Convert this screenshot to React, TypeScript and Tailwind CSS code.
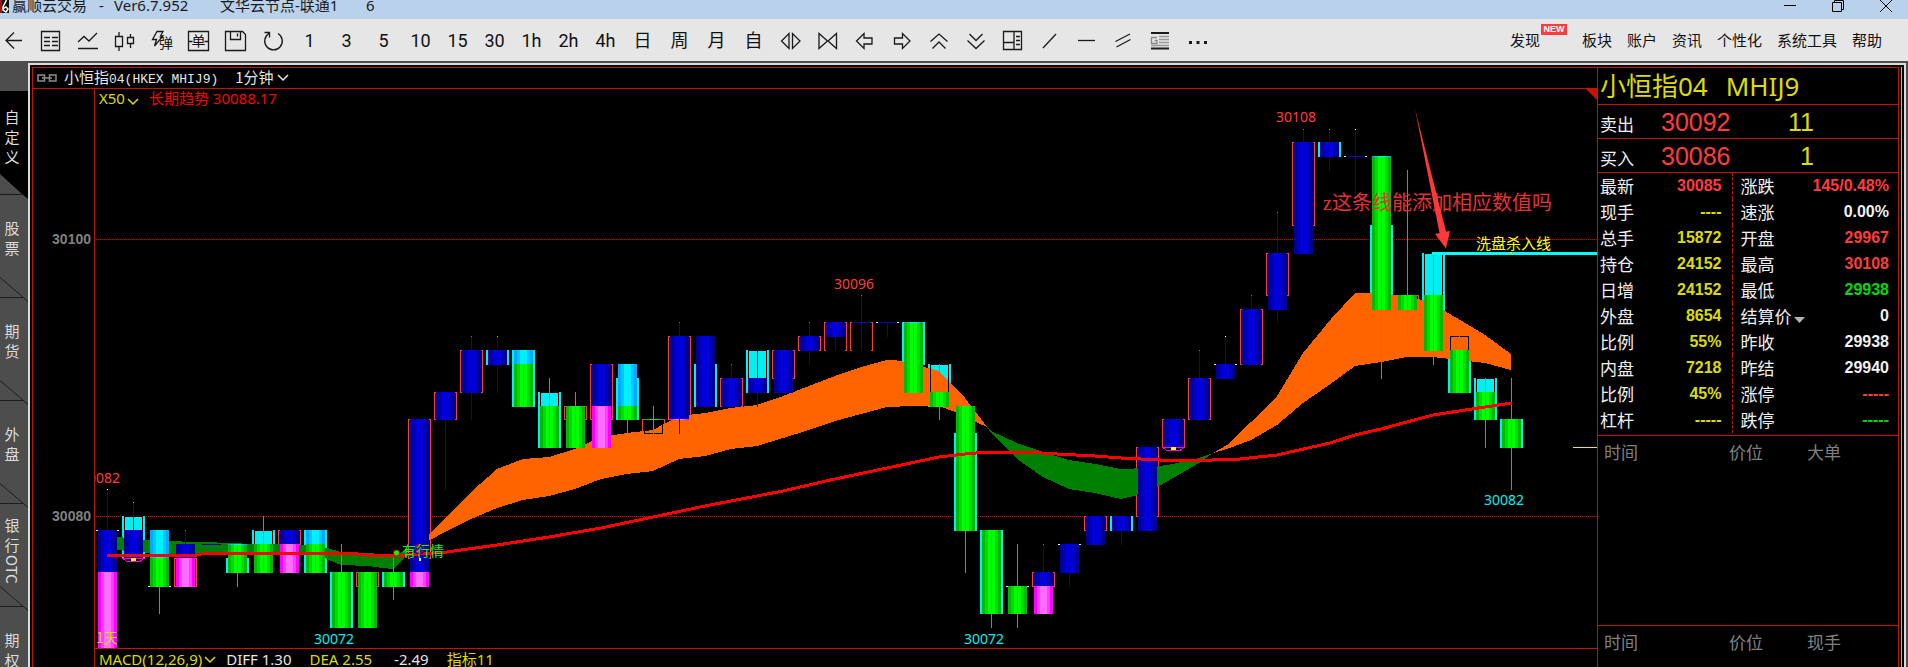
import type { ReactNode } from "react";

const SANS = "font-['Noto_Sans','Noto_Sans_CJK_SC',sans-serif]";
const CJK = "font-['Noto_Sans_CJK_SC',sans-serif]";

/* ---------- chart model ---------- */

type Fill = "B" | "G" | "P" | "L" | "C" | "K";
type Frame = "r" | "c" | "w";

interface Candle {
  i: number;
  frame?: [Frame, number, number];
  body: [Fill, number, number][];
  wick?: [number, number, "b" | "g"];
  dot?: string;
}

const px = (i: number) => 107 + 26 * i;
const py = (p: number) => Math.round(239.3 + (100 - p) * 13.85);

const RED = "#ff3c3c";
const CYAN = "#00f0f0";

const candles: Candle[] = [
  { i: 0, frame: ["w", 79, 79], body: [["B", 79, 76], ["P", 76, 70]], wick: [82, 79, "b"], dot: "#fff" },
  { i: 1, frame: ["c", 80, 77], body: [["C", 80, 79], ["B", 79, 77]], wick: [81, 79, "b"], dot: CYAN },
  { i: 2, frame: ["w", 75, 75], body: [["L", 79, 77], ["G", 77, 75]], wick: [75, 73, "g"] },
  { i: 3, frame: ["r", 77, 75], body: [["B", 78, 77], ["P", 77, 75]], wick: [79, 78, "b"], dot: RED },
  { i: 4, body: [["B", 78, 78]] },
  { i: 5, frame: ["c", 77, 76], body: [["G", 78, 76], ["L", 78, 78]], wick: [76, 75, "g"] },
  { i: 6, frame: ["c", 79, 78], body: [["C", 79, 78], ["G", 78, 76]], wick: [80, 77, "g"] },
  { i: 7, frame: ["r", 79, 78], body: [["B", 79, 78], ["P", 78, 76]] },
  { i: 8, frame: ["c", 79, 76], body: [["L", 79, 78], ["G", 78, 76]] },
  { i: 9, frame: ["c", 76, 72], body: [["G", 76, 72]], wick: [78, 76, "g"] },
  { i: 10, frame: ["r", 76, 75], body: [["G", 76, 72]] },
  { i: 11, frame: ["c", 76, 75], body: [["G", 76, 75]], wick: [77, 74, "g"] },
  { i: 12, frame: ["r", 87, 77], body: [["B", 87, 76], ["P", 76, 75]] },
  { i: 13, frame: ["r", 89, 87], body: [["B", 89, 87]], wick: [87, 82, "b"] },
  { i: 14, frame: ["r", 92, 89], body: [["B", 92, 89]], wick: [93, 87, "b"], dot: RED },
  { i: 15, frame: ["c", 92, 91], body: [["B", 92, 91]], wick: [93, 89, "b"], dot: CYAN },
  { i: 16, frame: ["c", 92, 88], body: [["L", 92, 91], ["G", 91, 88]] },
  { i: 17, frame: ["c", 89, 85], body: [["C", 89, 88], ["G", 88, 85]], wick: [90, 86, "g"] },
  { i: 18, frame: ["r", 88, 87], body: [["G", 88, 85]], wick: [89, 86, "g"] },
  { i: 19, frame: ["r", 91, 87], body: [["B", 91, 88], ["P", 88, 85]] },
  { i: 20, frame: ["c", 90, 87], body: [["L", 91, 88], ["G", 88, 87]], wick: [87, 86, "g"] },
  { i: 21, frame: ["r", 87, 86], body: [["K", 87, 86], ["G", 87, 87]], wick: [88, 86, "g"] },
  { i: 22, frame: ["r", 93, 87], body: [["B", 93, 87], ["P", 87, 87]], wick: [94, 86, "b"], dot: RED },
  { i: 23, frame: ["c", 91, 88], body: [["B", 93, 88]] },
  { i: 24, frame: ["r", 90, 88], body: [["B", 90, 88]], wick: [91, 90, "b"], dot: RED },
  { i: 25, frame: ["c", 92, 89], body: [["C", 92, 90], ["B", 90, 89]], wick: [92, 88, "b"] },
  { i: 26, frame: ["r", 92, 90], body: [["B", 92, 89]] },
  { i: 27, frame: ["r", 93, 92], body: [["B", 93, 92]], wick: [94, 91, "b"], dot: RED },
  { i: 28, frame: ["r", 94, 92], body: [["B", 94, 93]], wick: [93, 92, "b"] },
  { i: 29, frame: ["r", 94, 92], body: [["B", 94, 94]], wick: [96, 92, "b"], dot: RED },
  { i: 30, frame: ["w", 94, 94], body: [["B", 94, 94]], wick: [94, 93, "b"] },
  { i: 31, frame: ["c", 94, 91], body: [["G", 94, 89], ["L", 94, 94]] },
  { i: 32, frame: ["c", 91, 88], body: [["C", 91, 89], ["G", 89, 88]], wick: [91, 87, "g"] },
  { i: 33, frame: ["c", 86, 79], body: [["G", 88, 79]], wick: [79, 76, "g"] },
  { i: 34, frame: ["c", 79, 73], body: [["G", 79, 73]], wick: [73, 72, "g"] },
  { i: 35, frame: ["w", 75, 75], body: [["G", 75, 73]], wick: [78, 72, "g"] },
  { i: 36, frame: ["r", 76, 75], body: [["B", 76, 75], ["P", 75, 73]], wick: [78, 76, "b"], dot: RED },
  { i: 37, frame: ["w", 78, 78], body: [["B", 78, 76]], wick: [76, 75, "b"] },
  { i: 38, frame: ["r", 80, 79], body: [["B", 80, 78]] },
  { i: 39, frame: ["c", 80, 79], body: [["B", 80, 79]], wick: [79, 78, "b"] },
  { i: 40, frame: ["r", 85, 80], body: [["B", 85, 79]] },
  { i: 41, frame: ["r", 87, 85], body: [["B", 87, 85]] },
  { i: 42, frame: ["r", 90, 87], body: [["B", 90, 87]], wick: [92, 90, "b"], dot: RED },
  { i: 43, frame: ["w", 91, 91], body: [["B", 91, 90]], wick: [93, 91, "b"], dot: "#fff" },
  { i: 44, frame: ["r", 95, 91], body: [["B", 95, 91]], wick: [96, 95, "b"], dot: RED },
  { i: 45, frame: ["r", 99, 96], body: [["B", 99, 95]], wick: [102, 94, "b"], dot: RED },
  { i: 46, frame: ["r", 107, 101], body: [["B", 107, 99]], wick: [108, 107, "b"], dot: RED },
  { i: 47, frame: ["c", 107, 106], body: [["B", 107, 106]], wick: [108, 105, "b"], dot: CYAN },
  { i: 48, frame: ["w", 106, 106], body: [["B", 106, 106]], wick: [108, 103, "b"], dot: "#fff" },
  { i: 49, frame: ["c", 101, 95], body: [["G", 106, 95], ["L", 106, 106]], wick: [101, 90, "g"] },
  { i: 50, frame: ["r", 96, 95], body: [["G", 96, 95]], wick: [105, 93, "g"] },
  { i: 51, frame: ["c", 99, 92], body: [["C", 99, 96], ["G", 96, 92]], wick: [99, 91, "g"] },
  { i: 52, frame: ["c", 93, 89], body: [["K", 93, 92], ["G", 92, 89]], wick: [93, 89, "g"] },
  { i: 53, frame: ["c", 90, 87], body: [["C", 90, 89], ["G", 89, 87]], wick: [90, 85, "g"] },
  { i: 54, frame: ["c", 87, 85], body: [["G", 87, 85]], wick: [90, 82, "g"] },
];

const shades: Record<string, [string, string, string]> = {
  B: ["#000096", "#0000b9", "#0000dc"],
  G: ["#00b900", "#00dc00", "#00ff00"],
  P: ["#ff00ff", "#ff3cff", "#ff6eff"],
  L: ["#00aaff", "#00c8ff", "#00f0ff"],
};

function Bar({ fill, cx, top, bottom }: { fill: Fill; cx: number; top: number; bottom: number }) {
  const h = bottom - top + 1;
  if (fill === "K" || fill === "C")
    return <rect x={cx - 8.5} y={top + 0.5} width={18} height={h - 1} fill="none" stroke="#000" />;
  const [dark, mid, light] = shades[fill];
  return (
    <g>
      <rect x={cx - 9} y={top} width={19} height={h} fill={dark} />
      <rect x={cx - 6} y={top} width={13} height={h} fill={mid} />
      <rect x={cx - 3} y={top} width={7} height={h} fill={light} />
      {h > 4 && fill !== "P" && fill !== "L" && <rect x={cx} y={top + 2} width={1} height={h - 4} fill={mid} />}
    </g>
  );
}

function FrameMarks({ kind, cx, top, bottom }: { kind: Frame; cx: number; top: number; bottom: number }) {
  const h = bottom - top + 1;
  if (kind === "c")
    return (
      <g fill={CYAN}>
        <rect x={cx - 11} y={top} width={2} height={h} />
        <rect x={cx + 10} y={top} width={2} height={h} />
      </g>
    );
  if (kind === "w")
    return (
      <g fill="#f0f0f0">
        <rect x={cx - 11} y={top} width={2} height={1} />
        <rect x={cx + 10} y={top} width={2} height={1} />
      </g>
    );
  return (
    <g fill={RED}>
      <rect x={cx - 11} y={top} width={1} height={h} />
      <rect x={cx + 11} y={top} width={1} height={h} />
      <rect x={cx - 11} y={top} width={2} height={1} />
      <rect x={cx + 10} y={top} width={2} height={1} />
      <rect x={cx - 11} y={bottom} width={2} height={1} />
      <rect x={cx + 10} y={bottom} width={2} height={1} />
    </g>
  );
}

const greenBands = [
  "107,535 133,539 169,541 195,542 210,542 224,543 260,544 303,545 327,548 341,552 367,553 393,555 408,550 404,558 394,569 382,568 368,566 341,565 327,559 315,553 263,552 185,555 150,553 107,549",
  "987,427 991,431 1017,443 1043,452 1069,460 1095,464 1121,469 1147,468 1173,464 1199,458 1213,453 1199,463 1173,478 1147,493 1121,499 1095,493 1069,489 1043,477 1017,459 991,433",
];
const orangeBands = [
  "419,546 429,535 445,518 471,492 497,469 523,459 549,457 575,449 601,437 627,433 653,430 679,416 705,413 731,408 757,405 783,396 809,386 835,376 861,367 887,360 895,360 913,364 939,371 965,398 987,427 965,417 955,412 939,406 913,406 887,407 861,414 835,421 809,430 783,438 757,446 731,449 705,456 679,459 653,471 627,474 601,479 575,489 549,496 523,500 497,508 471,519 445,532",
  "1213,453 1227,445 1251,422 1277,396 1303,353 1331,319 1355,293 1364,293 1381,294 1407,296 1433,303 1443,310 1467,324 1485,335 1511,354 1511,370 1485,363 1459,360 1433,357 1407,357 1381,362 1355,366 1329,385 1303,403 1277,425 1251,440 1227,449",
];
const trend =
  "107,556 150,555 197,555 205,553 350,553 365,555 394,556 420,554 447,552 497,545 549,537 601,528 653,517 705,506 731,501 783,491 835,479 887,468 939,457 965,454 987,452 1027,452 1057,454 1095,456 1121,458 1160,460 1212,460 1240,459 1277,455 1330,443 1355,435 1381,429 1407,422 1433,415 1459,411 1485,407 1512,403";

const priceTags = [
  { x: 1276, y: 122, t: "30108", c: RED },
  { x: 834, y: 289, t: "30096", c: RED },
  { x: 80, y: 483, t: "30082", c: RED },
  { x: 314, y: 644, t: "30072", c: CYAN },
  { x: 964, y: 644, t: "30072", c: CYAN },
  { x: 1484, y: 505, t: "30082", c: CYAN },
];

function Chart() {
  return (
    <svg viewBox="33 89 1564 559" className="block h-auto w-full shrink-0" role="img" aria-label="小恒指04 1分钟 K线图">
      <defs>
        <clipPath id="plot">
          <rect x="95" y="89" width="1502" height="559" />
        </clipPath>
      </defs>
      <g className="font-['Liberation_Sans',sans-serif] text-[14px] font-bold" fill="#808080">
        <text x="91" y="244" textAnchor="end">30100</text>
        <text x="91" y="521" textAnchor="end">30080</text>
      </g>
      <g clipPath="url(#plot)">
        <g shapeRendering="crispEdges">
          <g stroke="#b40000" strokeDasharray="1 1">
            <line x1="96" x2="1597" y1="239.5" y2="239.5" />
            <line x1="96" x2="1597" y1="516.5" y2="516.5" />
          </g>
          {candles.map((c) => (
            <g key={c.i}>
              {c.frame && <FrameMarks kind={c.frame[0]} cx={px(c.i)} top={py(c.frame[1])} bottom={py(c.frame[2])} />}
              {c.body
                .filter((b) => b[0] === "C")
                .map((b) => (
                  <rect key={b[1]} x={px(c.i) - 8} y={py(b[1]) + 1} width={17} height={py(b[2]) - py(b[1])} fill={CYAN} />
                ))}
            </g>
          ))}
          {greenBands.map((p) => (
            <polygon key={p} points={p} fill="#008000" />
          ))}
          {orangeBands.map((p) => (
            <polygon key={p} points={p} fill="#ff6400" />
          ))}
          {candles.map((c) => {
            const x = px(c.i);
            return (
              <g key={c.i}>
                {c.body.map(([f, a, b], n) => (
                  <Bar key={n} fill={f} cx={x} top={py(a)} bottom={py(b)} />
                ))}
                {c.wick && (
                  <rect
                    x={x}
                    y={py(c.wick[0])}
                    width={1}
                    height={py(c.wick[1]) - py(c.wick[0]) + 1}
                    fill={c.wick[2] === "b" ? "#0000c8" : "#00dc00"}
                  />
                )}
                {c.dot && c.wick && <rect x={x} y={py(c.wick[0])} width={1} height={1} fill={c.dot} />}
              </g>
            );
          })}
          <polyline points={trend} fill="none" stroke="#ff0000" strokeWidth="3" />
          {[
            [133, 558],
            [1173, 447],
          ].map(([x, y]) => (
            <g key={x}>
              <path d={`M${x - 10} ${y + 0.5}h21l-4 3h-13z`} fill="#000" stroke="#ff00d2" />
              <rect x={x - 2} y={y} width={5} height={3} fill="#ffff00" />
            </g>
          ))}
          <rect x="1432" y="252" width="165" height="3" fill="#00ffff" />
          <rect x="1510" y="252" width="2" height="2" fill="#ffd200" />
          <rect x="1573" y="447" width="24" height="1" fill="#f0f000" />
        </g>
        <polygon points="1586,89 1597,89 1597,100" fill="#c3140a" />
        <g className={`${SANS} text-[14px]`}>
          {priceTags.map((p) => (
            <text key={`${p.x}`} x={p.x} y={p.y} fill={p.c}>
              {p.t}
            </text>
          ))}
        </g>
        <text x="96" y="643" fill="#dcdc00" className={`${CJK} text-[14px]`}>
          1天
        </text>
        <circle cx="396.5" cy="553" r="3" fill="#00ff00" stroke="#dc0000" />
        <circle cx="419.5" cy="548.5" r="5" fill="none" stroke="#1e00b4" strokeWidth="2" />
        <circle cx="419.5" cy="548.5" r="4" fill="none" stroke="#dc0000" />
        <circle cx="419.5" cy="549" r="2" fill="none" stroke="#dc0000" />
        <text x="402" y="556" fill="#00ff00" className={`${CJK} text-[14px]`}>
          有行情
        </text>
        <rect x="419" y="558" width="2" height="3" fill="#ffff00" />
        <text x="1476" y="249" fill="#ffff00" className={`${CJK} text-[15px]`}>
          洗盘杀入线
        </text>
        <text x="1323" y="210" fill="#e63232" className="font-['Liberation_Serif','Noto_Sans_CJK_SC',serif] text-[20px]">
          z这条线能添加相应数值吗
        </text>
        <path d="M1415 109L1446 231.5L1450 231L1446 248.5L1435 234L1439.500 233Z" fill="#ff3838" />
      </g>
      <rect x="94" y="89" width="1" height="559" fill="#c3140a" />
    </svg>
  );
}

/* ---------- toolbar ---------- */

function Icon({ children }: { children: ReactNode }) {
  return (
    <svg viewBox="0 0 24 24" className="size-6" fill="none" stroke="#1a1a1a" strokeWidth="1.3">
      {children}
    </svg>
  );
}

function TextTool({ children }: { children: ReactNode }) {
  return <span className="font-['Roboto','Noto_Sans_CJK_SC',sans-serif] text-[18px] leading-6">{children}</span>;
}

const tools: { name: string; view: ReactNode }[] = [
  { name: "返回", view: <Icon><path d="M20 11.500H4M12 3.500L4 11.500L12 19.500" /></Icon> },
  {
    name: "报价",
    view: (
      <Icon>
        <path d="M2.500 2.500h18v19h-18z" />
        <path d="M5 8.500h6M13 8.500h6M5 12.500h6M13 12.500h6M5 16.500h6M13 16.500h6" />
      </Icon>
    ),
  },
  { name: "分时", view: <Icon><path d="M2 13L8 7.500L13 12L21 4M2 19.500h20" /></Icon> },
  {
    name: "K线",
    view: (
      <Icon>
        <path d="M2.500 7.500h7v10h-7zM6 3v4.500M6 17.500V22M14.500 8.500h6v6h-6zM17.500 5v3.500M17.500 14.500V19" />
      </Icon>
    ),
  },
  {
    name: "闪电下单",
    view: (
      <Icon>
        <path d="M7 2.500h6L10.500 7h2.500L4.500 17l2-6.500H2.500z" />
        <text x="9" y="19" fill="#111" stroke="none" className={`${CJK} text-[14px]`}>弹</text>
      </Icon>
    ),
  },
  {
    name: "下单",
    view: (
      <Icon>
        <path d="M1.500 2.500h20v19h-20zM1.500 12.500h4M17.500 12.500h4" />
        <text x="4.500" y="17" fill="#111" stroke="none" className={`${CJK} text-[14px]`}>单</text>
      </Icon>
    ),
  },
  { name: "保存", view: <Icon><path d="M1.500 2.500h17l3 3v16h-20zM6.500 2.500v8h10v-8M13.500 4.500v3" /></Icon> },
  { name: "刷新", view: <Icon><path d="M8 4.500a8.800 8.800 0 1 0 9 0M3.500 3.500h5v5" /></Icon> },
  ...["1", "3", "5", "10", "15", "30", "1h", "2h", "4h", "日", "周", "月", "自"].map((t) => ({
    name: `周期 ${t}`,
    view: <TextTool>{t}</TextTool>,
  })),
  { name: "放宽", view: <Icon><path d="M10 4.500v15L2.500 12zM13.500 4.500v15L21 12z" /></Icon> },
  { name: "收窄", view: <Icon><path d="M3 4.500v15L11.500 12zM20.500 4.500v15L12 12z" /></Icon> },
  { name: "左移", view: <Icon><path d="M3.500 12L11 4.500V9h8v6h-8v4.500z" /></Icon> },
  { name: "右移", view: <Icon><path d="M20 12L12.500 4.500V9h-8v6h8v4.500z" /></Icon> },
  { name: "上翻", view: <Icon><path d="M3.500 12.500L12 5l8.500 7.500M5.500 19.500L12 13l6.500 6.500" /></Icon> },
  { name: "下翻", view: <Icon><path d="M5.500 5L12 11.500L18.500 5M3.500 11.500L12 19.500l8.500-8" /></Icon> },
  {
    name: "布局",
    view: <Icon><path d="M2.500 2.500h18v18h-18zM13 2.500v18M2.500 13.500h10.500M15 7.500h4M15 11.500h4M15 15.500h4" /></Icon>,
  },
  { name: "斜线", view: <Icon><path d="M5 19L18 5" /></Icon> },
  { name: "横线", view: <Icon><path d="M3 11.500h17" /></Icon> },
  { name: "平行线", view: <Icon><path d="M3.500 12.500L18 5M4.500 18L18.500 10.500" /></Icon> },
  {
    name: "信息",
    view: (
      <Icon>
        <path d="M2 4h18M2 19.500h18" strokeWidth="2" />
        <path d="M10 7.500h10M10 10.500h10M10 13.500h10M2 16.500h18" stroke="#999" />
        <path d="M8 8.500H2.500v6H8v-3H5.500" stroke="#888" />
      </Icon>
    ),
  },
  {
    name: "更多",
    view: <Icon><path d="M3 12h3v3H3zM10.500 12h3v3h-3zM18 12h3v3h-3z" fill="#1a1a1a" stroke="none" /></Icon>,
  },
];

const menu = ["板块", "账户", "资讯", "个性化", "系统工具", "帮助"];

function Chevron({ color }: { color: string }) {
  return (
    <svg viewBox="0 0 12 12" className="size-3 shrink-0" fill="none" stroke={color} strokeWidth="1.500">
      <path d="M1 4l5 5l5-5" />
    </svg>
  );
}

/* ---------- sidebar ---------- */

const tabs: { chars: string[]; latin?: string }[] = [
  { chars: ["自", "定", "义"] },
  { chars: ["股", "票"] },
  { chars: ["期", "货"] },
  { chars: ["外", "盘"] },
  { chars: ["银", "行"], latin: "OTC" },
  { chars: ["期", "权"] },
];

function SideTab({ chars, latin, active }: { chars: string[]; latin?: string; active: boolean }) {
  return (
    <button
      type="button"
      className={`relative flex h-[103px] w-full shrink-0 flex-col items-center pr-1 text-[15px] leading-5 text-[#dcdcdc] ${CJK} ${
        active ? "bg-black pt-4" : latin ? "pt-3" : "pt-6"
      }`}
    >
      {chars.map((c) => (
        <span key={c}>{c}</span>
      ))}
      {latin && <span className="[writing-mode:vertical-rl]">{latin}</span>}
      <svg viewBox="0 0 28 25" className="absolute -bottom-[5px] left-0 z-10 h-[25px] w-7">
        {active ? (
          <g>
            <polygon points="0,0 22,20 0,20" fill="#4d4d4d" />
            <polygon points="22,20 28,20 28,25" fill="#000" />
            <path d="M0 20.500H22" stroke="#1a1a1a" />
          </g>
        ) : (
          <path d="M0 0.500L28 24.500M0 20.500H23" stroke="#1e1e1e" fill="none" />
        )}
      </svg>
    </button>
  );
}

/* ---------- quote panel ---------- */

const Y = "text-[#dcdc00]";
const R = "text-[#ff3c3c]";
const G = "text-[#00dc00]";
const W = "text-[#f0f0f0]";

const quote: [string, string, string, string, string, string][] = [
  ["最新", "30085", R, "涨跌", "145/0.48%", R],
  ["现手", "----", Y, "速涨", "0.00%", W],
  ["总手", "15872", Y, "开盘", "29967", R],
  ["持仓", "24152", Y, "最高", "30108", R],
  ["日增", "24152", Y, "最低", "29938", G],
  ["外盘", "8654", Y, "结算价", "0", W],
  ["比例", "55%", Y, "昨收", "29938", W],
  ["内盘", "7218", Y, "昨结", "29940", W],
  ["比例", "45%", Y, "涨停", "-----", R],
  ["杠杆", "-----", Y, "跌停", "-----", G],
];

function TradeTable({ cols }: { cols: string[] }) {
  return (
    <table className={`w-full table-fixed text-left text-[17px] leading-6 text-[#808080] ${CJK}`}>
      <thead>
        <tr>
          <th className="w-[131px] pt-1 pl-[6px] font-normal">{cols[0]}</th>
          <th className="w-[78px] pt-1 font-normal">{cols[1]}</th>
          <th className="pt-1 font-normal">{cols[2]}</th>
        </tr>
      </thead>
    </table>
  );
}

function QuotePanel() {
  return (
    <aside className="flex w-[301px] shrink-0 flex-col border-l border-[#c3140a]">
      <h2 className={`flex h-[37px] shrink-0 items-center gap-[18px] border-b border-[#c3140a] pl-0.5 text-[26px] leading-9 text-[#dcdc00] ${SANS}`}>
        <span>小恒指04</span>
        <span>MHIJ9</span>
      </h2>
      {[
        ["卖出", "30092", "11"],
        ["买入", "30086", "1"],
      ].map(([k, p, n]) => (
        <div key={k} className="flex h-[34px] shrink-0 items-center border-b border-[#c3140a] pl-0.5">
          <span className={`w-[61px] pt-1 text-[17px] leading-6 text-[#f0f0f0] ${CJK}`}>{k}</span>
          <span className="w-[90px] font-['Liberation_Sans',sans-serif] text-[25px] leading-8 text-[#ff3c3c]">{p}</span>
          <span className="w-[63px] text-right font-['Liberation_Sans',sans-serif] text-[25px] leading-8 text-[#dcdc00]">{n}</span>
        </div>
      ))}
      <div className="h-[263px] shrink-0 border-b border-[#c3140a]">
        <table className="w-full table-fixed leading-[26px]">
          <tbody>
            {quote.map(([a, av, ac, b, bv, bc], n) => (
              <tr key={n} className="h-[26px]">
                <th className={`w-[54px] p-0 pl-0.5 text-left text-[17px] font-normal text-[#f0f0f0] ${CJK}`}>{a}</th>
                <td className={`w-[80px] border-r border-dashed border-r-[#c3140a] p-0 pr-[10px] text-right font-['Liberation_Sans',sans-serif] text-[16px] font-bold ${ac}`}>
                  {av}
                </td>
                <th className={`w-[76px] p-0 pl-2 text-left text-[17px] font-normal whitespace-nowrap text-[#f0f0f0] ${CJK}`}>
                  {b === "结算价" ? (
                    <button type="button" className="flex items-center gap-0.5">
                      {b}
                      <svg viewBox="0 0 11 6" className="mt-2 h-1.5 w-[11px] shrink-0">
                        <polygon points="0,0 11,0 5.500,6" fill="#b4b4b4" />
                      </svg>
                    </button>
                  ) : (
                    b
                  )}
                </th>
                <td className={`p-0 pr-[9px] text-right font-['Liberation_Sans',sans-serif] text-[16px] font-bold ${bc}`}>{bv}</td>
              </tr>
            ))}
          </tbody>
        </table>
      </div>
      <div className="h-[190px] shrink-0 border-b border-[#c3140a]">
        <TradeTable cols={["时间", "价位", "大单"]} />
      </div>
      <TradeTable cols={["时间", "价位", "现手"]} />
    </aside>
  );
}

/* ---------- page ---------- */

export default function App() {
  return (
    <div className="flex h-screen flex-col overflow-hidden bg-[#4d4d4d]">
      <header className="flex h-[19px] shrink-0 items-start bg-[#b9d1ea]">
        <svg viewBox="0 0 9 13" className="h-[13px] w-[9px] shrink-0">
          <rect width="9" height="13" fill="#111" />
          <rect width="2" height="13" fill="#a01414" />
          <path d="M6.500 0L3 7v3l3 2l2-3l-2-2l-3 2" fill="none" stroke="#fff" strokeWidth="1.500" />
        </svg>
        <h1 className={`flex pl-[3px] text-[15px] leading-[10px] whitespace-pre text-[#1a1a1a] ${SANS}`}>
          <span className="w-[87px]">赢顺云交易</span>
          <span className="w-[15px]">-</span>
          <span className="w-[106px]">Ver6.7.952</span>
          <span className="w-[146px]">文华云节点-联通1</span>
          <span>6</span>
        </h1>
        <div className="ml-auto flex gap-[34px] pr-[15px]">
          <button type="button" aria-label="最小化">
            <svg viewBox="0 0 14 13" className="h-[13px] w-[14px]" stroke="#000"><path d="M1 5.500h12" /></svg>
          </button>
          <button type="button" aria-label="还原">
            <svg viewBox="0 0 14 13" className="h-[13px] w-[14px]" stroke="#000" fill="none">
              <path d="M1.500 2.500h9v9h-9zM3.500 2.500v-2h9v9h-2" />
            </svg>
          </button>
          <button type="button" aria-label="关闭">
            <svg viewBox="0 0 14 13" className="h-[13px] w-[14px]" stroke="#000"><path d="M1 0L13 12M13 0L1 12" /></svg>
          </button>
        </div>
      </header>

      <div className="flex h-[42px] shrink-0 items-center bg-[#e6e6e6]">
        <div className="-ml-[5px] flex pt-0.5">
          {tools.map((t) => (
            <button key={t.name} type="button" aria-label={t.name} className="flex w-[37px] items-center justify-center text-[#111]">
              {t.view}
            </button>
          ))}
        </div>
        <nav className={`ml-auto flex gap-[15px] pr-[26px] text-[15px] leading-6 text-[#111] ${CJK}`}>
          <a href="#discover" className="mr-[27px] flex">
            <span className="relative">
              发现
              <span className="absolute -top-1 left-full ml-px flex h-[11px] w-[26px] items-center justify-center bg-[#ff3c3c] font-['Liberation_Sans',sans-serif] text-[9px] leading-none font-bold text-white">
                NEW
              </span>
            </span>
          </a>
          {menu.map((m) => (
            <a key={m} href={`#${m}`}>
              {m}
            </a>
          ))}
        </nav>
      </div>

      <div className="flex min-h-0 flex-1 pt-0.5 pr-0.5">
        <nav className="flex w-7 shrink-0 flex-col pt-7">
          {tabs.map((t, n) => (
            <SideTab key={n} {...t} active={n === 0} />
          ))}
        </nav>
        <div className="flex min-w-0 flex-1 border-2 border-b-0 border-[#dcdcd8] bg-black p-0.5 pb-0">
          <div className="flex min-w-0 flex-1 border-r border-[#b4b4b4] pr-0.5">
            <main className="flex min-w-0 flex-1 border border-b-0 border-[#c3140a]">
              <section className="flex min-w-0 flex-1 flex-col">
                <div className={`flex h-[21px] shrink-0 items-center border-b border-[#c3140a] pl-1 text-[15px] leading-5 text-[#e6e6e6] ${CJK}`}>
                  <svg viewBox="0 0 20 8" className="mr-[7px] h-2 w-5" fill="none" stroke="#8c8c8c" strokeWidth="1.500">
                    <path d="M7.500 1h-6.500v6h6.500zM12.500 1h6.500v6h-6.500zM5 4h10" />
                  </svg>
                  <div className="flex items-baseline">
                    <span>小恒指</span>
                    <span className="mr-[17px] font-['Liberation_Mono',monospace] text-[13px]">04(HKEX MHIJ9)</span>
                    <button type="button" className="flex items-center gap-[3px]">
                      <span>1分钟</span>
                      <Chevron color="#e6e6e6" />
                    </button>
                  </div>
                </div>
                <div className="relative">
                  <Chart />
                  <div className={`absolute top-0 left-[66px] flex h-[18px] items-center text-[15px] leading-5 ${SANS}`}>
                    <button type="button" className="flex items-center gap-0.5 text-[#dcdc00]">
                      X50
                      <span className="pt-1.5">
                        <Chevron color="#dcdc00" />
                      </span>
                    </button>
                    <span className="ml-[10px] text-[#ff0000]">长期趋势 30088.17</span>
                  </div>
                </div>
                <div className={`ml-[61px] flex min-h-0 flex-1 items-start border-t border-l border-[#c3140a] pl-1 text-[15px] leading-5 ${SANS}`}>
                  <button type="button" className="mr-[10px] flex items-center gap-0.5 text-[#dcdc00]">
                    MACD(12,26,9)
                    <Chevron color="#dcdc00" />
                  </button>
                  <span className="mr-[18px] text-[#e6e6e6]">DIFF 1.30</span>
                  <span className="mr-[22px] text-[#dcdc00]">DEA 2.55</span>
                  <span className="mr-[18px] text-[#e6e6e6]">-2.49</span>
                  <span className="text-[#dcdc00]">指标11</span>
                </div>
              </section>
              <QuotePanel />
            </main>
          </div>
        </div>
      </div>
    </div>
  );
}
